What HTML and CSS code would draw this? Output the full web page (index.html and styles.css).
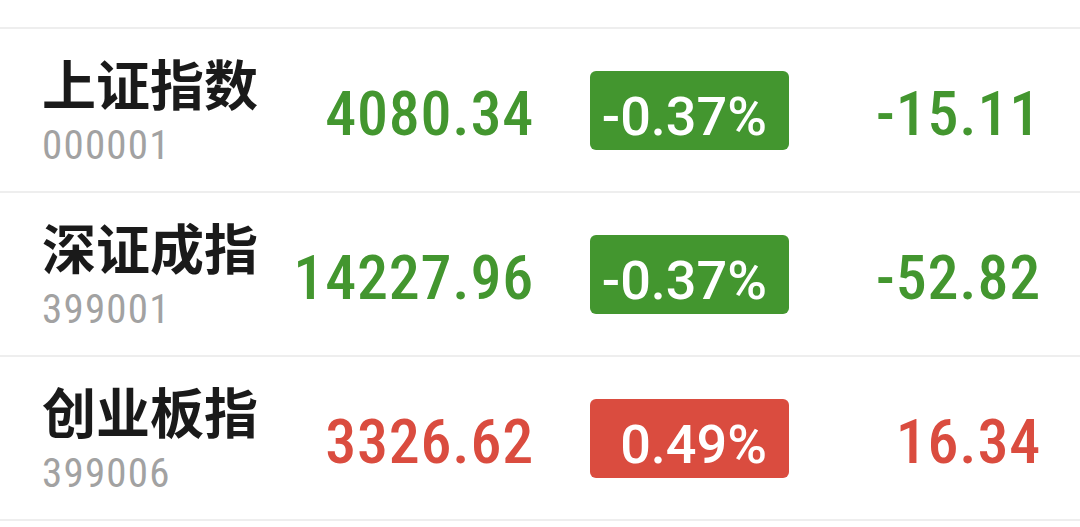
FILE: index.html
```html
<!DOCTYPE html>
<html lang="zh-CN">
<head>
<meta charset="utf-8">
<title>指数</title>
<link rel="stylesheet" href="styles.css">
</head>
<body>
<div class="top-gap"></div>
<ul class="index-list">
  <li class="row down">
    <div class="name-col">
      <div class="name">上证指数</div>
      <div class="code">000001</div>
    </div>
    <div class="price">4080.34</div>
    <div class="badge-col"><span class="badge">-0.37%</span></div>
    <div class="change">-15.11</div>
  </li>
  <li class="row down">
    <div class="name-col">
      <div class="name">深证成指</div>
      <div class="code">399001</div>
    </div>
    <div class="price">14227.96</div>
    <div class="badge-col"><span class="badge">-0.37%</span></div>
    <div class="change">-52.82</div>
  </li>
  <li class="row up">
    <div class="name-col">
      <div class="name">创业板指</div>
      <div class="code">399006</div>
    </div>
    <div class="price">3326.62</div>
    <div class="badge-col"><span class="badge">0.49%</span></div>
    <div class="change">16.34</div>
  </li>
</ul>
</body>
</html>
```

FILE: styles.css
```css
html, body {
  margin: 0;
  padding: 0;
  background: #ffffff;
}

body {
  font-family: Roboto, "Noto Sans CJK SC", sans-serif;
  overflow: hidden;
}

.top-gap {
  height: 27px;
}

.index-list {
  list-style: none;
  margin: 0;
  padding: 0;
  border-top: 2px solid #eeeeee;
}

.row {
  display: grid;
  grid-template-columns: 246px 246px 255px 252px;
  align-items: center;
  height: 162px;
  padding-left: 42px;
  border-bottom: 2px solid #eeeeee;
}

.name-col {
  display: flex;
  flex-direction: column;
}

.name {
  font-family: "Noto Sans CJK SC", sans-serif;
  font-weight: 700;
  font-size: 54px;
  line-height: 62px;
  color: #1a1a1a;
  margin-top: -3px;
}

.code {
  font-family: Roboto, sans-serif;
  font-stretch: 85%;
  font-size: 41px;
  line-height: 40px;
  letter-spacing: 1.2px;
  color: #a2a2a2;
  margin-top: 11px;
}

.price,
.change {
  font-family: Roboto, sans-serif;
  font-stretch: 85%;
  font-weight: 500;
  font-size: 62px;
  line-height: 1;
  letter-spacing: 0.8px;
  text-align: right;
  margin-top: 8px;
}

.badge-col {
  display: flex;
  justify-content: flex-end;
}

.badge {
  box-sizing: border-box;
  width: 199px;
  height: 79px;
  border-radius: 6px;
  padding-top: 12px;
  padding-right: 22px;
  display: flex;
  align-items: center;
  justify-content: flex-end;
  font-family: Roboto, sans-serif;
  font-weight: 500;
  font-size: 54px;
  color: #ffffff;
}

.down .price,
.down .change {
  color: #43962f;
}

.down .badge {
  background: #43962f;
}

.up .price,
.up .change {
  color: #da4c3f;
}

.up .badge {
  background: #da4c3f;
}
```
